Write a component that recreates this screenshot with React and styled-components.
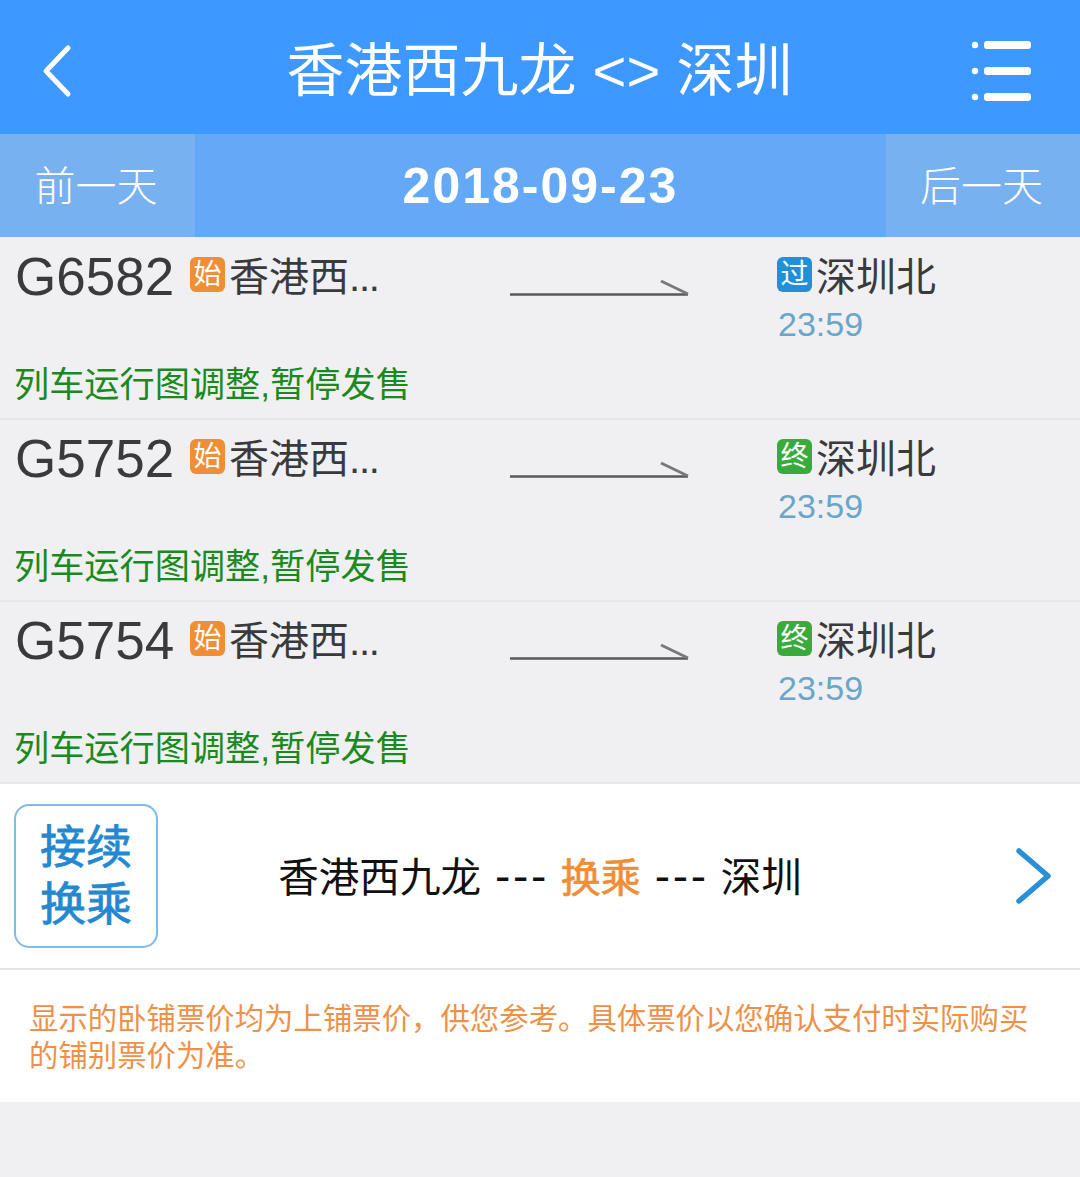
import React from "react";
import styled, { createGlobalStyle } from "styled-components";

const trains = [
  { no: "G6582", tag: "过", tagColor: "#2190d8" },
  { no: "G5752", tag: "终", tagColor: "#38ab3c" },
  { no: "G5754", tag: "终", tagColor: "#38ab3c" },
];

const App = () => {
  return (
    <Page>
      <GlobalStyle />
      <Header>
        <IconSlot>
          <svg width="40" height="60" viewBox="0 0 40 60" fill="none">
            <path d="M28 7 L6 30 L28 53" stroke="#fff" strokeWidth="5" strokeLinecap="round" strokeLinejoin="round" />
          </svg>
        </IconSlot>
        <Title>香港西九龙 &lt;&gt; 深圳</Title>
        <MenuSlot>
          <svg width="60" height="62" viewBox="0 0 60 62" fill="#fff">
            <circle cx="4" cy="4" r="3.2" />
            <circle cx="4" cy="30" r="3.2" />
            <circle cx="4" cy="56" r="3.2" />
            <rect x="13" y="0" width="47" height="8" rx="3" />
            <rect x="13" y="26" width="47" height="8" rx="3" />
            <rect x="13" y="52" width="47" height="8" rx="3" />
          </svg>
        </MenuSlot>
      </Header>

      <DateBar>
        <DayButton $width={195}>前一天</DayButton>
        <DateText>2018-09-23</DateText>
        <DayButton $width={194}>后一天</DayButton>
      </DateBar>

      <TrainList>
        {trains.map((t) => (
          <TrainRow key={t.no}>
            <TrainTop>
              <TrainNo>{t.no}</TrainNo>
              <From>
                <Tag $bg="#ee8e36">始</Tag>
                <StationName>
                  香港西<Dots>...</Dots>
                </StationName>
              </From>
              <ArrowSlot>
                <svg width="180" height="18" viewBox="0 0 180 18" fill="none">
                  <path d="M0 15.5 H178" stroke="#58585c" strokeWidth="2.4" />
                  <path d="M151 2 L178 15" stroke="#78787c" strokeWidth="2.8" />
                </svg>
              </ArrowSlot>
              <To>
                <StationLine>
                  <Tag $bg={t.tagColor}>{t.tag}</Tag>
                  <StationName>深圳北</StationName>
                </StationLine>
                <ArriveTime>23:59</ArriveTime>
              </To>
            </TrainTop>
            <StatusText>列车运行图调整,暂停发售</StatusText>
          </TrainRow>
        ))}
      </TrainList>

      <TransferPanel>
        <TransferButton>
          接续
          <br />
          换乘
        </TransferButton>
        <RouteText>
          香港西九龙<Dashes>---</Dashes>
          <Highlight>换乘</Highlight>
          <Dashes>---</Dashes>深圳
        </RouteText>
        <ChevronSlot>
          <svg width="36" height="60" viewBox="0 0 36 60" fill="none">
            <path d="M3 5 L32 30 L3 55" stroke="#2a8fd6" strokeWidth="5.5" strokeLinecap="round" strokeLinejoin="round" />
          </svg>
        </ChevronSlot>
      </TransferPanel>

      <Notice>
        显示的卧铺票价均为上铺票价，供您参考。具体票价以您确认支付时实际购买的铺别票价为准。
      </Notice>
    </Page>
  );
};

const GlobalStyle = createGlobalStyle`
  html, body {
    margin: 0;
    padding: 0;
    background: #f0f0f2;
  }
  * {
    box-sizing: border-box;
  }
`;

const Page = styled.div`
  width: 1080px;
  height: 1177px;
  overflow: hidden;
  background: #f0f0f2;
  font-family: "Liberation Sans", "Noto Sans CJK SC", sans-serif;
`;

const Header = styled.div`
  height: 134px;
  background: #3d98ff;
  display: flex;
  align-items: center;
  justify-content: space-between;
  padding: 0 49px 0 40px;
`;

const IconSlot = styled.div`
  width: 40px;
  height: 60px;
  margin-top: 7px;
`;

const MenuSlot = styled.div`
  width: 60px;
  height: 62px;
  margin-top: 10px;
`;

const Title = styled.div`
  color: #fff;
  font-size: 58px;
  line-height: 70px;
  font-weight: 400;
  white-space: nowrap;
  margin-top: 8px;
  margin-left: 28px;
`;

const DateBar = styled.div`
  height: 103px;
  background: #64a9f7;
  display: flex;
  align-items: center;
  justify-content: space-between;
`;

const DayButton = styled.div`
  width: ${(p) => p.$width}px;
  height: 100%;
  background: #78b1f0;
  color: #fff;
  font-size: 41px;
  font-weight: 300;
  padding: 0 3px 6px 0;
  display: flex;
  align-items: center;
  justify-content: center;
`;

const DateText = styled.div`
  color: #fff;
  font-size: 50px;
  font-weight: 700;
  letter-spacing: 2px;
`;

const TrainList = styled.div`
  padding-top: 1px;
`;

const TrainRow = styled.div`
  height: 182px;
  padding: 14px 0 0 15px;
  border-bottom: 2px solid #e6e6e9;
`;

const TrainTop = styled.div`
  display: flex;
  align-items: flex-start;
  height: 111px;
`;

const TrainNo = styled.div`
  width: 175px;
  color: #3a3a3c;
  font-size: 53px;
  line-height: 50px;
`;

const From = styled.div`
  width: 320px;
  display: flex;
  align-items: center;
`;

const Tag = styled.span`
  width: 35px;
  height: 35px;
  border-radius: 6px;
  background: ${(p) => p.$bg};
  color: #fff;
  font-size: 28px;
  line-height: 35px;
  text-align: center;
  margin: -5px 4px 0 0;
  flex-shrink: 0;
`;

const StationName = styled.span`
  color: #3a3a3c;
  font-size: 40px;
  line-height: 50px;
  white-space: nowrap;
`;

const Dots = styled.span`
  letter-spacing: -1.2px;
`;

const ArrowSlot = styled.div`
  width: 267px;
  height: 18px;
  margin-top: 27px;
`;

const To = styled.div`
  display: flex;
  flex-direction: column;
`;

const StationLine = styled.div`
  display: flex;
  align-items: center;
`;

const ArriveTime = styled.div`
  color: #6ba6c9;
  font-size: 34px;
  line-height: 44px;
  margin: 0 0 0 1px;
`;

const StatusText = styled.div`
  color: #1b8a1e;
  font-size: 35.2px;
  line-height: 44px;
  margin-left: -1px;
  white-space: nowrap;
`;

const TransferPanel = styled.div`
  height: 186px;
  background: #fff;
  border-bottom: 2px solid #e5e5e8;
  display: grid;
  grid-template-columns: 1fr auto 1fr;
  align-items: center;
  padding: 0 28px 0 14px;
`;

const TransferButton = styled.div`
  width: 144px;
  height: 144px;
  border: 2px solid #7cbce8;
  border-radius: 15px;
  color: #2388d0;
  font-size: 46px;
  line-height: 57px;
  -webkit-text-stroke: 0.8px #2388d0;
  text-align: center;
  display: flex;
  align-items: center;
  justify-content: center;
`;

const RouteText = styled.div`
  color: #111;
  font-size: 40.6px;
  white-space: nowrap;
  margin: 0 0 4px 14px;
  display: flex;
  align-items: baseline;
`;

const Dashes = styled.span`
  font-size: 46px;
  letter-spacing: 2.6px;
  margin: 0 12px 0 14px;
`;

const Highlight = styled.span`
  color: #ee8e36;
  -webkit-text-stroke: 0.7px #ee8e36;
  font-size: 40px;
`;

const ChevronSlot = styled.div`
  justify-self: end;
  width: 36px;
  height: 60px;
`;

const Notice = styled.div`
  height: 132px;
  background: #fff;
  color: #ee9148;
  font-size: 29.4px;
  line-height: 37px;
  padding: 30px 29px 0;
`;

export default App;
